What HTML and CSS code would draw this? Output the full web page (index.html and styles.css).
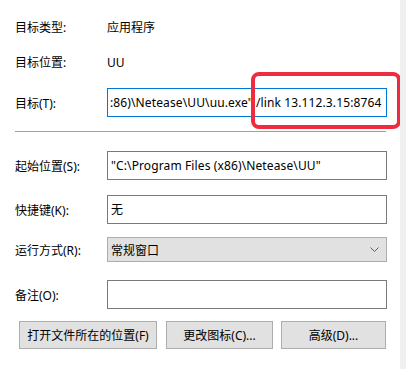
FILE: index.html
```html
<html lang="zh-CN">
<head>
    <meta charset="UTF-8">
    <title>快捷方式属性</title>
    <link rel="stylesheet" href="styles.css">
</head>
<body>

    <div class="panel">
        <div class="row row-info first">
            <div class="label">目标类型:</div>
            <div class="value">应用程序</div>
        </div>
        <div class="row row-info second">
            <div class="label">目标位置:</div>
            <div class="value">UU</div>
        </div>
        <div class="row row-target">
            <div class="label">目标(T):</div>
            <div class="field focused">:86)\Netease\UU\uu.exe" /link 13.112.3.15:8764</div>
        </div>

        <div class="sep"></div>

        <div class="row row-start">
            <div class="label">起始位置(S):</div>
            <div class="field">"C:\Program Files (x86)\Netease\UU"</div>
        </div>
        <div class="row row-key">
            <div class="label">快捷键(K):</div>
            <div class="field">无</div>
        </div>
        <div class="row row-run">
            <div class="label">运行方式(R):</div>
            <div class="combo">
                <span>常规窗口</span>
                <svg width="9" height="5" viewBox="0 0 9 5"><polyline points="0.5,0.5 4.5,4.5 8.5,0.5" fill="none" stroke="#606060" stroke-width="1"/></svg>
            </div>
        </div>
        <div class="row row-note">
            <div class="label">备注(O):</div>
            <div class="field"></div>
        </div>

        <div class="buttons">
            <button class="btn btn-open">打开文件所在的位置(F)</button>
            <button class="btn btn-icon">更改图标(C)...</button>
            <button class="btn btn-adv">高级(D)...</button>
        </div>

        <!-- 红框标注 -->
        <div class="mark"></div>
    </div>

</body>
</html>
```

FILE: styles.css
```css
body {
    margin: 0;
    padding: 0;
    background-color: #f0f0f0;
    font-family: "Noto Sans", "Noto Sans CJK SC", sans-serif;
    font-size: 12px;
    color: #000;
}
.panel {
    position: relative;
    width: 385px;
    height: 369px;
    padding-left: 15px;
    background: #fff;
    overflow: hidden;
}
.row {
    display: flex;
    align-items: center;
}
.label {
    width: 92px;
    flex: none;
}
.row-info {
    height: 20px;
}
.first {
    padding-top: 17px;
}
.second {
    margin-top: 15px;
}
.row-target {
    margin-top: 16px;
}
.field {
    box-sizing: border-box;
    width: 280px;
    height: 29px;
    line-height: 27px;
    padding: 0 3px;
    border: 1px solid #7a7a7a;
    background: #fff;
    white-space: nowrap;
    overflow: hidden;
    letter-spacing: 0.12px;
}
.field.focused {
    border-color: #0078d7;
    padding-left: 2px;
}
.sep {
    width: 371px;
    height: 1px;
    margin-top: 14px;
    background: #a0a0a0;
}
.row-start {
    margin-top: 19px;
}
.row-key {
    margin-top: 15px;
}
.row-run {
    margin-top: 13px;
}
.combo {
    box-sizing: border-box;
    width: 280px;
    height: 25px;
    padding: 0 7px 0 3px;
    border: 1px solid #adadad;
    background: #e1e1e1;
    display: flex;
    align-items: center;
    justify-content: space-between;
}
.row-note {
    margin-top: 18px;
}
.buttons {
    display: flex;
    margin-top: 12px;
    padding-left: 4px;
}
.btn {
    box-sizing: border-box;
    height: 28px;
    border: 1px solid #adadad;
    background: #e1e1e1;
    font-family: inherit;
    font-size: 12px;
    color: #000;
    padding: 0;
}
.btn-open {
    width: 138px;
}
.btn-icon {
    width: 107px;
    margin-left: 9px;
}
.btn-adv {
    width: 105px;
    margin-left: 8px;
}
.mark {
    position: absolute;
    left: 251px;
    top: 72px;
    width: 142px;
    height: 49px;
    border: 4px solid #ef2b3f;
    border-radius: 8px;
}
```
